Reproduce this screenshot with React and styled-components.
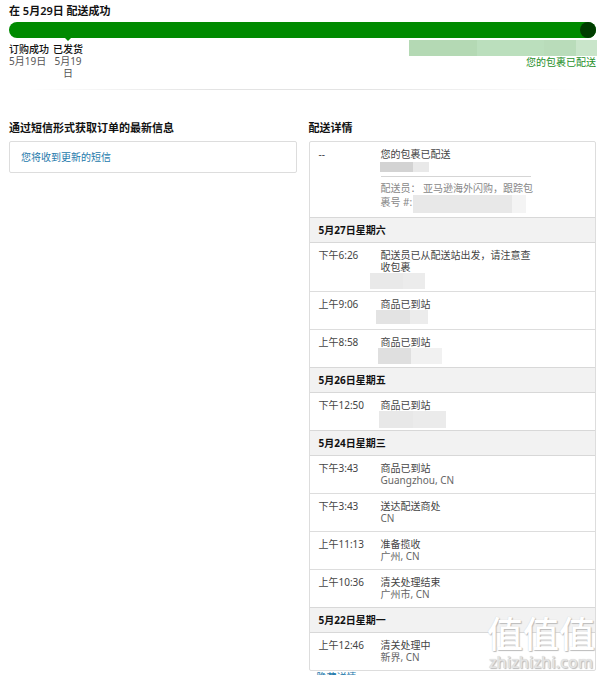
import React from "react";
import styled, { createGlobalStyle } from "styled-components";

const GlobalStyle = createGlobalStyle`
  * { box-sizing: border-box; }
  html { scrollbar-width: none; }
  body {
    margin: 0;
    background: #fff;
    color: #333;
    font: 10px/12px "Noto Sans", "Noto Sans CJK SC", sans-serif;
  }
`;

const Page = styled.main`
  position: relative;
  padding: 3px 4px 0 9px;
`;

const Title = styled.h1`
  margin: 0 0 3px;
  font-size: 11px;
  line-height: 16px;
  font-weight: 600;
  color: #111;
`;

const Track = styled.div`
  display: flex;
  justify-content: flex-end;
  height: 16px;
  border-radius: 8px;
  background: #008a00;
`;

const Knob = styled.span`
  width: 16px;
  height: 16px;
  border-radius: 50%;
  background: #003c00;
`;

const Milestones = styled.div`
  display: flex;
  align-items: flex-start;
  height: 51px;
`;

const Milestone = styled.div`
  position: relative;
  width: ${(p) => p.$width};
  margin-right: 4px;
  padding-top: 5px;
  text-align: ${(p) => p.$align || "left"};
  color: #555;
`;

const MilestoneName = styled.strong`
  display: block;
  white-space: nowrap;
  font-weight: 500;
  color: #111;
`;

const MilestoneDate = styled.span`
  display: block;
  padding: 0 ${(p) => (p.$narrow ? "1px" : "0")};
`;

const Pointer = styled.i`
  position: absolute;
  top: 0;
  left: 50%;
  margin-left: -3px;
  border: 3px solid transparent;
  border-top-color: #008a00;
  border-bottom: 0;
`;

const Arrival = styled.div`
  margin-left: auto;
  padding-top: 2px;
  display: flex;
  flex-direction: column;
  align-items: flex-end;
  color: #1f8f2a;
`;

const ArrivalMask = styled.div`
  width: 188px;
  height: 16px;
  margin-right: -1px;
  background: linear-gradient(90deg, #b4d9b4 0 36%, #bbdfbd 36% 72%, #b9dcba 72% 89%, #c9e5ca 89%);
`;

const Divider = styled.hr`
  margin: 0 0 30px;
  border: 0;
  height: 1px;
  background: linear-gradient(90deg, #fff 3%, #e3e3e3 35%, #e3e3e3 60%, #fff 97%);
`;

const Columns = styled.div`
  display: grid;
  grid-template-columns: 1fr 1fr;
  gap: 12px;
  align-items: start;
`;

const Heading = styled.h2`
  margin: 0 0 5px;
  font-size: 11px;
  line-height: 16px;
  font-weight: 600;
  color: #111;
`;

const Box = styled.div`
  border: 1px solid #ddd;
  border-radius: 2px;
`;

const SmsBox = styled(Box)`
  padding: 9px 11px;
`;

const TextLink = styled.a`
  color: #2479ab;
  text-decoration: none;
`;

const Events = styled.table`
  width: 100%;
  border-spacing: 0;
  table-layout: fixed;
`;

const TimeCol = styled.col`
  width: 71px;
`;

const Cell = styled.td`
  height: ${(p) => (p.$first ? "75px" : p.$afterDay ? "37px" : "38px")};
  padding: 6px 0 ${(p) => (p.$first ? "7px" : "6px")} ${(p) => (p.$time ? "9px" : "0")};
  border-top: ${(p) => (p.$first || p.$afterDay ? "0" : "1px solid #ddd")};
  vertical-align: top;
  color: #444;
`;

const DayCell = styled.th`
  height: 26px;
  padding: 0 9px;
  border: solid #d8d8d8;
  border-width: 1px 0;
  background: #f2f2f2;
  text-align: left;
  font-weight: 700;
  color: #111;
`;

const Detail = styled.div`
  max-width: 154px;
`;

const Place = styled.div`
  position: relative;
  min-height: 12px;
  color: #666;
`;

const Mask = styled.span`
  position: absolute;
  top: ${(p) => p.$top || 0}px;
  left: ${(p) => p.$left}px;
  width: ${(p) => p.$width}px;
  height: ${(p) => p.$height}px;
  background: linear-gradient(90deg, ${(p) => p.$from} ${(p) => p.$split}%, ${(p) => p.$to} ${(p) => p.$split}%);
`;

const Carrier = styled.div`
  position: relative;
  margin-top: 4px;
  padding-top: 5px;
  line-height: 14px;
  color: #888;
  background: linear-gradient(#d5d5d5, #d5d5d5) 0 0 / 150px 1px no-repeat;
`;

const Footer = styled.div`
  padding: 0 8px;
`;

const Watermark = styled.div`
  position: absolute;
  top: 612px;
  right: 5px;
  display: flex;
  flex-direction: column;
  align-items: center;
  color: #fff;
  text-shadow: 1px 1px 1px #bbb, 0 0 1px #ccc;
  pointer-events: none;
`;

const Mark = styled.span`
  font: 500 36px/40px "Noto Sans CJK SC", sans-serif;
`;

const Domain = styled.span`
  font: 600 16px/20px "Open Sans", sans-serif;
  color: #e4e4e4;
`;

const days = [
  {
    day: "5月27日星期六",
    events: [
      { time: "下午6:26", text: "配送员已从配送站出发，请注意查收包裹", mask: { $left: -11, $width: 55, $height: 16, $top: 0, $from: "#e9e9e9", $to: "#ececec", $split: 60 } },
      { time: "上午9:06", text: "商品已到站", mask: { $left: -5, $width: 52, $height: 14, $from: "#e3e3e3", $to: "#ececec", $split: 65 } },
      { time: "上午8:58", text: "商品已到站", mask: { $left: -3, $width: 64, $height: 16, $from: "#dfdfdf", $to: "#f1f1f1", $split: 52 } },
    ],
  },
  {
    day: "5月26日星期五",
    events: [
      { time: "下午12:50", text: "商品已到站", mask: { $left: -2, $width: 67, $height: 17, $from: "#e8e8e8", $to: "#ebebeb", $split: 50 } },
    ],
  },
  {
    day: "5月24日星期三",
    events: [
      { time: "下午3:43", text: "商品已到站", place: "Guangzhou, CN" },
      { time: "下午3:43", text: "送达配送商处", place: "CN" },
      { time: "上午11:13", text: "准备揽收", place: "广州, CN" },
      { time: "上午10:36", text: "清关处理结束", place: "广州市, CN" },
    ],
  },
  {
    day: "5月22日星期一",
    events: [{ time: "上午12:46", text: "清关处理中", place: "新界, CN" }],
  },
];

function EventRow({ event, afterDay }) {
  return (
    <tr>
      <Cell $time $afterDay={afterDay}>{event.time}</Cell>
      <Cell $afterDay={afterDay}>
        <Detail>
          {event.text}
          <Place>
            {event.place}
            {event.mask && <Mask {...event.mask} />}
          </Place>
        </Detail>
      </Cell>
    </tr>
  );
}

export default function App() {
  return (
    <>
      <GlobalStyle />
      <Page>
        <Title>在 5月29日 配送成功</Title>
        <Track role="progressbar" aria-label="配送成功" aria-valuenow={100}>
          <Knob />
        </Track>
        <Milestones>
          <Milestone $width="40px">
            <MilestoneName>订购成功</MilestoneName>
            <MilestoneDate>5月19日</MilestoneDate>
          </Milestone>
          <Milestone $width="30px" $align="center">
            <Pointer />
            <MilestoneName>已发货</MilestoneName>
            <MilestoneDate $narrow>5月19日</MilestoneDate>
          </Milestone>
          <Arrival>
            <ArrivalMask />
            您的包裹已配送
          </Arrival>
        </Milestones>
        <Divider />
        <Columns>
          <section>
            <Heading>通过短信形式获取订单的最新信息</Heading>
            <SmsBox>
              <TextLink href="#sms">您将收到更新的短信</TextLink>
            </SmsBox>
          </section>
          <section>
            <Heading>配送详情</Heading>
            <Box>
              <Events>
                <colgroup>
                  <TimeCol />
                  <col />
                </colgroup>
                <tbody>
                  <tr>
                    <Cell $time $first>--</Cell>
                    <Cell $first>
                      <Detail>
                        您的包裹已配送
                        <Place>
                          <Mask $left={-1} $top={2} $width={49} $height={10} $from="#d3d3d3" $to="#e9e9e9" $split={67} />
                        </Place>
                        <Carrier>
                          配送员： 亚马逊海外闪购，跟踪包裹号 #:
                          <Mask $left={32} $top={19} $width={113} $height={18} $from="#e8e8e8" $to="#f4f4f4" $split={88} />
                        </Carrier>
                      </Detail>
                    </Cell>
                  </tr>
                </tbody>
                {days.map((group) => (
                  <tbody key={group.day}>
                    <tr>
                      <DayCell colSpan={2} scope="rowgroup">{group.day}</DayCell>
                    </tr>
                    {group.events.map((event, i) => (
                      <EventRow key={event.time + event.text} event={event} afterDay={i === 0} />
                    ))}
                  </tbody>
                ))}
              </Events>
            </Box>
            <Footer>
              <TextLink href="#hide">隐藏详情</TextLink>
            </Footer>
          </section>
        </Columns>
        <Watermark>
          <Mark>值值值</Mark>
          <Domain>zhizhizhi.com</Domain>
        </Watermark>
      </Page>
    </>
  );
}
